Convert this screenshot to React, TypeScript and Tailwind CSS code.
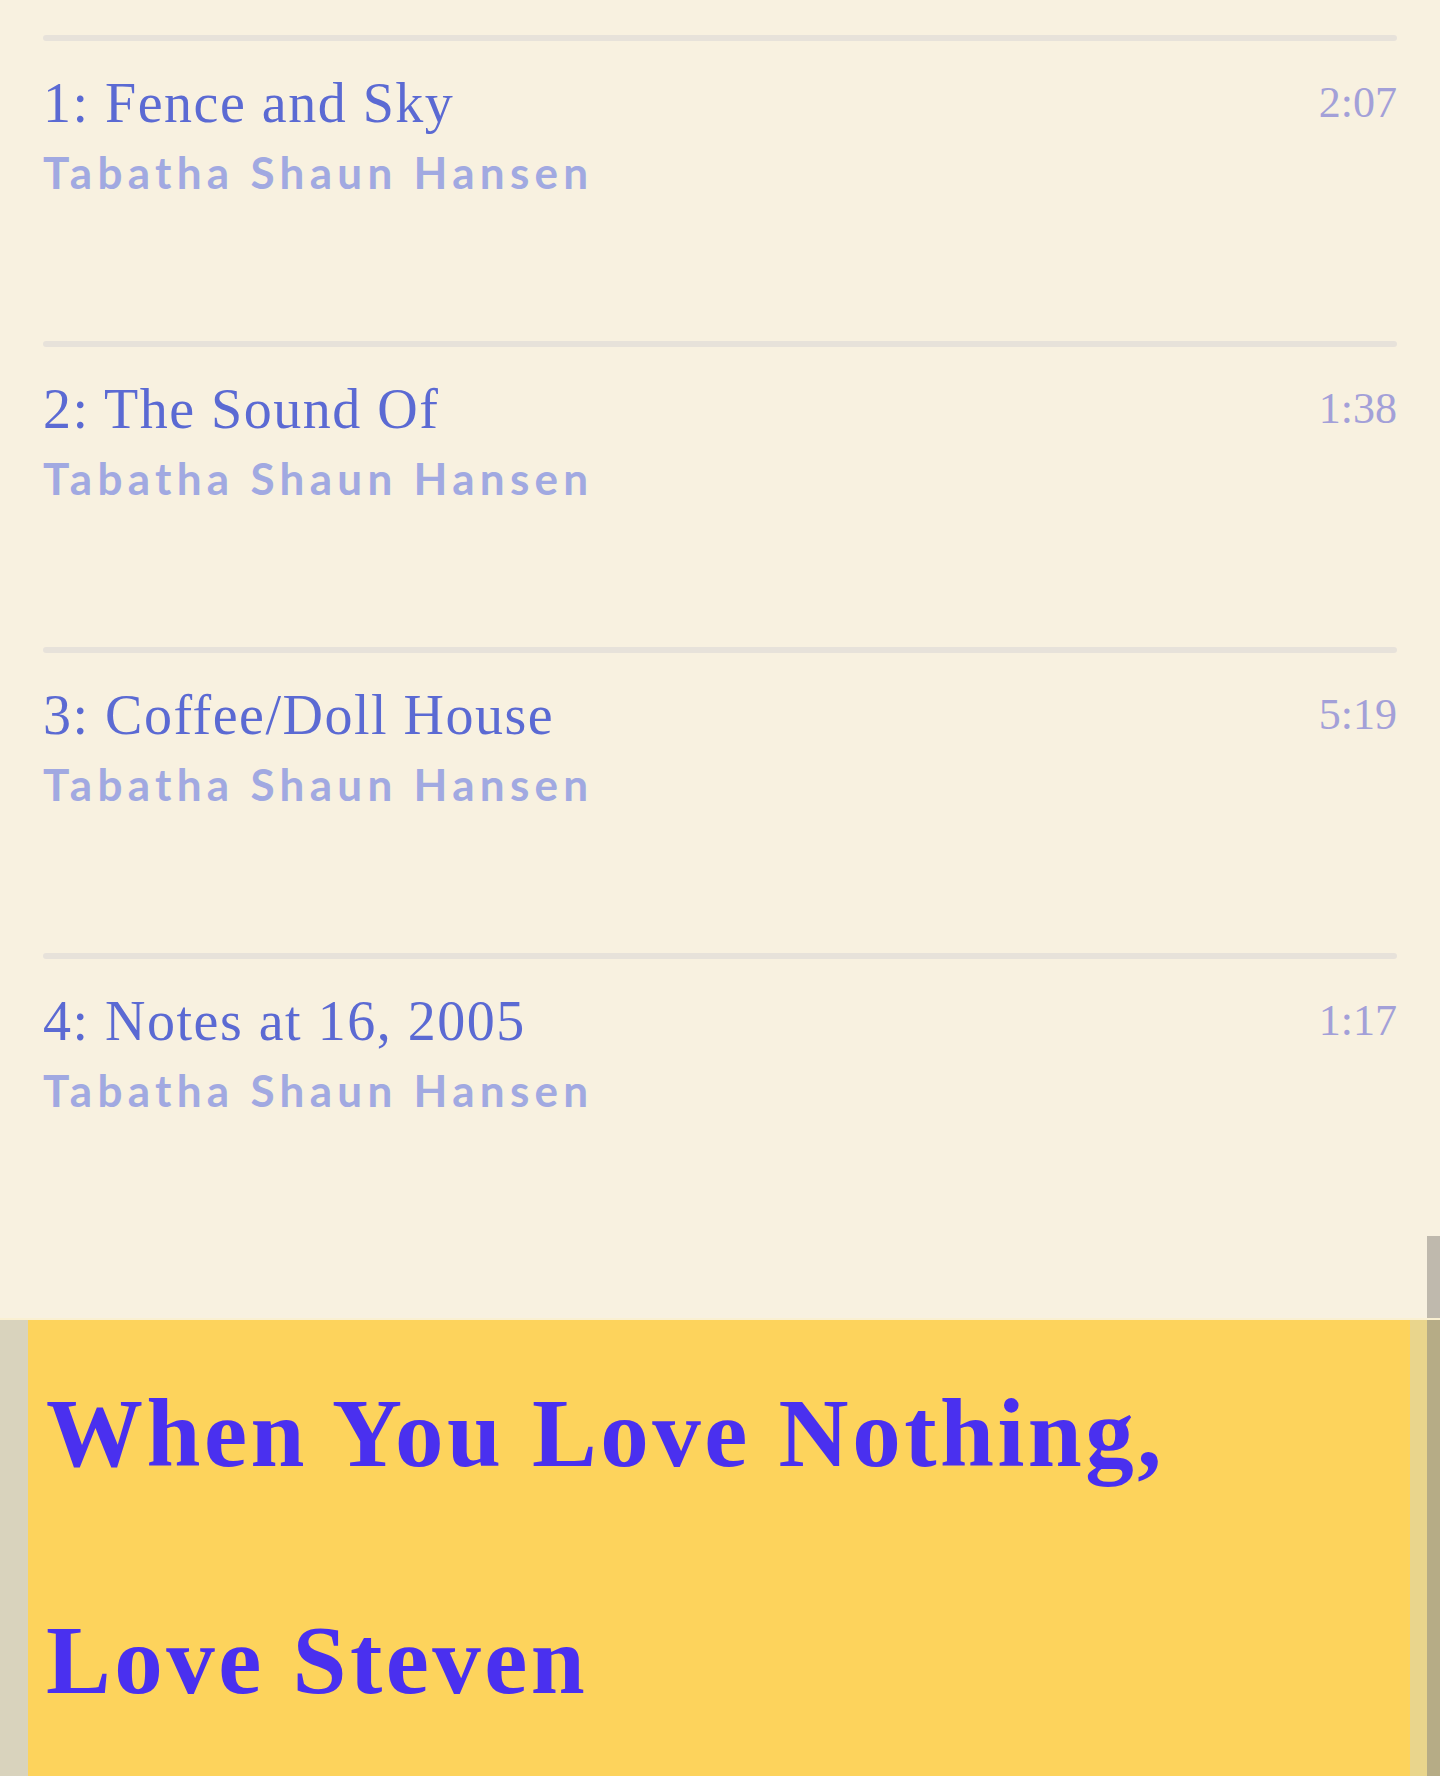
import React from 'react';

type Track = {
  no: number;
  title: string;
  artist: string;
  length: string;
};

const tracks: Track[] = [
  { no: 1, title: 'Fence and Sky', artist: 'Tabatha Shaun Hansen', length: '2:07' },
  { no: 2, title: 'The Sound Of', artist: 'Tabatha Shaun Hansen', length: '1:38' },
  { no: 3, title: 'Coffee/Doll House', artist: 'Tabatha Shaun Hansen', length: '5:19' },
  { no: 4, title: 'Notes at 16, 2005', artist: 'Tabatha Shaun Hansen', length: '1:17' },
];

const serif = "font-['Liberation_Serif','DejaVu_Serif',serif]";

const TrackRow: React.FC<{ track: Track }> = function TrackRow({ track }) {
  return (
    <li className="h-[306px]">
      <div className="h-[6px] rounded-full bg-[#E7E2DA]" />
      <div className="mt-[30px] flex items-start justify-between">
        <span className={`${serif} text-[56px] leading-[64px] tracking-[1.5px] text-[#5B6AD3]`}>
          {track.no}: {track.title}
        </span>
        <span className={`${serif} text-[44px] leading-[64px] text-[#A3A0D8]`}>
          {track.length}
        </span>
      </div>
      <div className="mt-[11px] font-['Lato','Open_Sans',sans-serif] text-[44px] font-bold leading-[52px] tracking-[5.3px] text-[#A1A9E1]">
        {track.artist}
      </div>
    </li>
  );
};

export default function App() {
  return (
    <div className="relative min-h-[1776px] w-full overflow-hidden bg-[#F8F1E0]">
      <ul className="px-[43px] pt-[35px]">
        {tracks.map((track) => (
          <TrackRow key={track.no} track={track} />
        ))}
      </ul>

      <section className="mt-[59px] flex h-[458px] border-t-[2px] border-[#FAF0D2]">
        <div className="w-[28px] shrink-0 bg-[#D9D3BD]" />
        <div className="flex-1 bg-[#FDD35C] pl-[18px]">
          <h1 className={`${serif} text-[97px] font-bold leading-[227px] tracking-[3.5px] text-[#4A30EF]`}>
            When You Love Nothing,
            <br />
            Love Steven
          </h1>
        </div>
        <div className="w-[17px] shrink-0 bg-[#E9D58C]" />
        <div className="w-[13px] shrink-0 bg-[#B6AC86]" />
      </section>

      {/* scrollbar thumb above the yellow card */}
      <div className="absolute right-0 top-[1236px] h-[82px] w-[13px] bg-[#BFB9AD]" />
    </div>
  );
}
